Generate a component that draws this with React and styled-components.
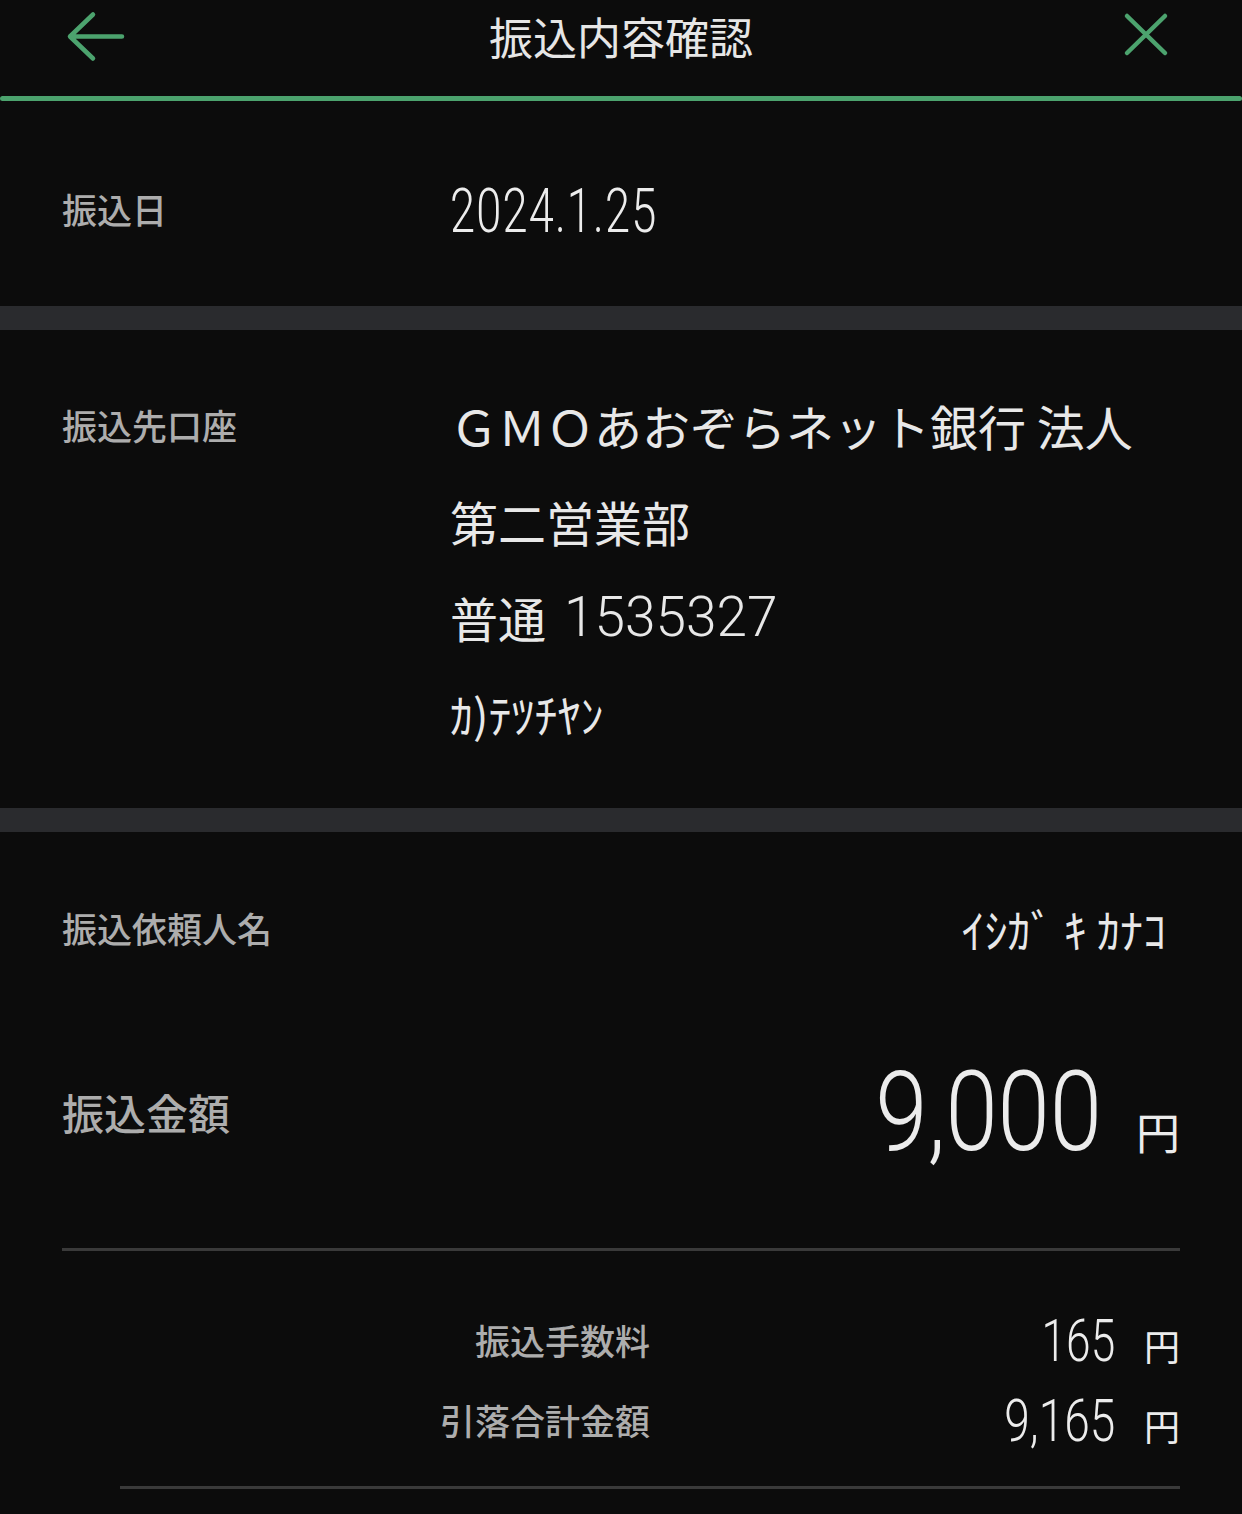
import React from "react";
import styled, { createGlobalStyle } from "styled-components";

const GREEN = "#4ca36e";
const JP = "'Noto Sans CJK JP', 'Noto Sans', sans-serif";
const NUM = "Roboto, 'Noto Sans CJK JP', sans-serif";

const Global = createGlobalStyle`
  html, body { margin: 0; padding: 0; background: #0c0c0c; }
  #root { width: 1242px; min-height: 1514px; background: #0c0c0c; }
  * { box-sizing: border-box; }
`;

const Page = styled.div`
  width: 1242px;
  min-height: 1514px;
  background: #0c0c0c;
  font-family: ${JP};
  color: #e8e8e8;
  overflow: hidden;
`;

const Header = styled.header`
  display: grid;
  grid-template-columns: 1fr auto 1fr;
  align-items: center;
  height: 72px;
  margin-bottom: 24px;
  padding: 0 66px;
`;

const IconButton = styled.button`
  display: flex;
  align-items: center;
  justify-content: center;
  width: 60px;
  height: 60px;
  padding: 0;
  border: 0;
  background: none;
  justify-self: ${(p) => p.$side};
  cursor: pointer;
`;

const Title = styled.h1`
  margin: 0;
  font-family: ${JP};
  font-size: 44px;
  font-weight: 400;
  color: #e6e6e6;
  line-height: 1;
  letter-spacing: 0;
`;

const GreenBar = styled.div`
  height: 5px;
  background: ${GREEN};
  border-radius: 3px;
`;

const Band = styled.div`
  height: 24px;
  background: #2a2b2e;
`;

const Section = styled.section`
  display: grid;
  grid-template-columns: 388px 1fr;
  align-items: ${(p) => p.$align || "center"};
  padding: ${(p) => p.$pad || "0 62px"};
  min-height: ${(p) => p.$h || 0}px;
`;

const Label = styled.div`
  font-family: ${JP};
  font-size: ${(p) => p.$size || 35}px;
  font-weight: 500;
  color: #adadad;
  line-height: ${(p) => p.$lh || "1.2"};
  white-space: nowrap;
`;

const Lines = styled.div`
  display: flex;
  flex-direction: column;
`;

const Line = styled.div`
  height: 96px;
  display: flex;
  align-items: center;
  font-family: ${JP};
  font-size: ${(p) => p.$size || 48}px;
  font-weight: 400;
  color: #e8e8e8;
  white-space: nowrap;
`;

const Digits = styled.span`
  font-family: ${NUM};
  font-weight: 300;
  font-size: ${(p) => p.$size}px;
  margin-left: ${(p) => p.$ml || 0}px;
`;

const Narrow = styled.span`
  display: inline-block;
  font-family: ${NUM};
  font-weight: 300;
  font-size: ${(p) => p.$size}px;
  line-height: 1;
  color: #ececec;
  letter-spacing: ${(p) => p.$ls || 0}px;
  transform: scaleX(${(p) => p.$sx});
  transform-origin: ${(p) => p.$origin || "right"} center;
  white-space: nowrap;
`;

const Yen = styled.span`
  font-family: ${JP};
  font-size: ${(p) => p.$size}px;
  font-weight: 400;
  line-height: 1;
  color: #ececec;
  margin-left: ${(p) => p.$gap}px;
`;

const Detail = styled.section`
  display: flex;
  flex-direction: column;
  padding: 48px 62px 0;
`;

const Row = styled.div`
  display: flex;
  align-items: center;
  justify-content: space-between;
  height: ${(p) => p.$h}px;
`;

const Name = styled.div`
  font-family: ${JP};
  font-size: 46px;
  font-weight: 400;
  color: #e8e8e8;
  margin-right: 14px;
  white-space: nowrap;
`;

const Amount = styled.div`
  display: flex;
  align-items: baseline;
`;

const DateValue = styled.div`
  padding-top: 6px;
`;

const Divider = styled.hr`
  margin: ${(p) => p.$m};
  border: 0;
  height: 3px;
  background: #3a3a3a;
`;

const FeeRow = styled.div`
  display: grid;
  grid-template-columns: 588px 1fr;
  align-items: center;
  height: 80px;
`;

const FeeLabel = styled(Label)`
  justify-self: end;
`;

const FeeValue = styled.div`
  justify-self: end;
  display: flex;
  align-items: baseline;
`;

const BackIcon = () => (
  <svg width="60" height="60" viewBox="0 0 60 60" fill="none">
    <path
      d="M27 8.5 L4 30.5 L27 52.5 M4 30.5 H56"
      stroke={GREEN}
      strokeWidth="4.5"
      strokeLinecap="round"
      strokeLinejoin="round"
    />
  </svg>
);

const CloseIcon = () => (
  <svg width="60" height="60" viewBox="0 0 60 60" fill="none">
    <path
      d="M11 10 L49 47 M49 10 L11 47"
      stroke={GREEN}
      strokeWidth="4.5"
      strokeLinecap="round"
    />
  </svg>
);

export default function App() {
  return (
    <Page>
      <Global />
      <Header>
        <IconButton $side="start" aria-label="戻る">
          <BackIcon />
        </IconButton>
        <Title>振込内容確認</Title>
        <IconButton $side="end" aria-label="閉じる">
          <CloseIcon />
        </IconButton>
      </Header>
      <GreenBar />

      <Section $h={205} $pad="10px 62px 0">
        <Label>振込日</Label>
        <DateValue>
          <Narrow $size={61} $sx={0.74} $ls={1.6} $origin="left">
            2024.1.25
          </Narrow>
        </DateValue>
      </Section>
      <Band />

      <Section $align="start" $pad="47px 62px">
        <Label $lh="96px">振込先口座</Label>
        <Lines>
          <Line>ＧＭＯあおぞらネット銀行 法人</Line>
          <Line>第二営業部</Line>
          <Line>
            普通<Digits $size={55} $ml={18}>1535327</Digits>
          </Line>
          <Line $size={46}>ｶ)ﾃﾂﾁﾔﾝ</Line>
        </Lines>
      </Section>
      <Band />

      <Detail>
        <Row $h={96}>
          <Label>振込依頼人名</Label>
          <Name>ｲｼｶﾞ ｷ ｶﾅｺ</Name>
        </Row>
        <Row $h={272}>
          <Label $size={42}>振込金額</Label>
          <Amount>
            <Narrow $size={112} $sx={0.84}>
              9,000
            </Narrow>
            <Yen $size={44} $gap={34}>
              円
            </Yen>
          </Amount>
        </Row>
        <Divider $m="0 0 49px" />
        <FeeRow>
          <FeeLabel>振込手数料</FeeLabel>
          <FeeValue>
            <Narrow $size={59} $sx={0.75}>
              165
            </Narrow>
            <Yen $size={36} $gap={29}>
              円
            </Yen>
          </FeeValue>
        </FeeRow>
        <FeeRow>
          <FeeLabel>引落合計金額</FeeLabel>
          <FeeValue>
            <Narrow $size={59} $sx={0.78}>
              9,165
            </Narrow>
            <Yen $size={36} $gap={29}>
              円
            </Yen>
          </FeeValue>
        </FeeRow>
        <Divider $m="26px 0 0 58px" />
      </Detail>
    </Page>
  );
}
